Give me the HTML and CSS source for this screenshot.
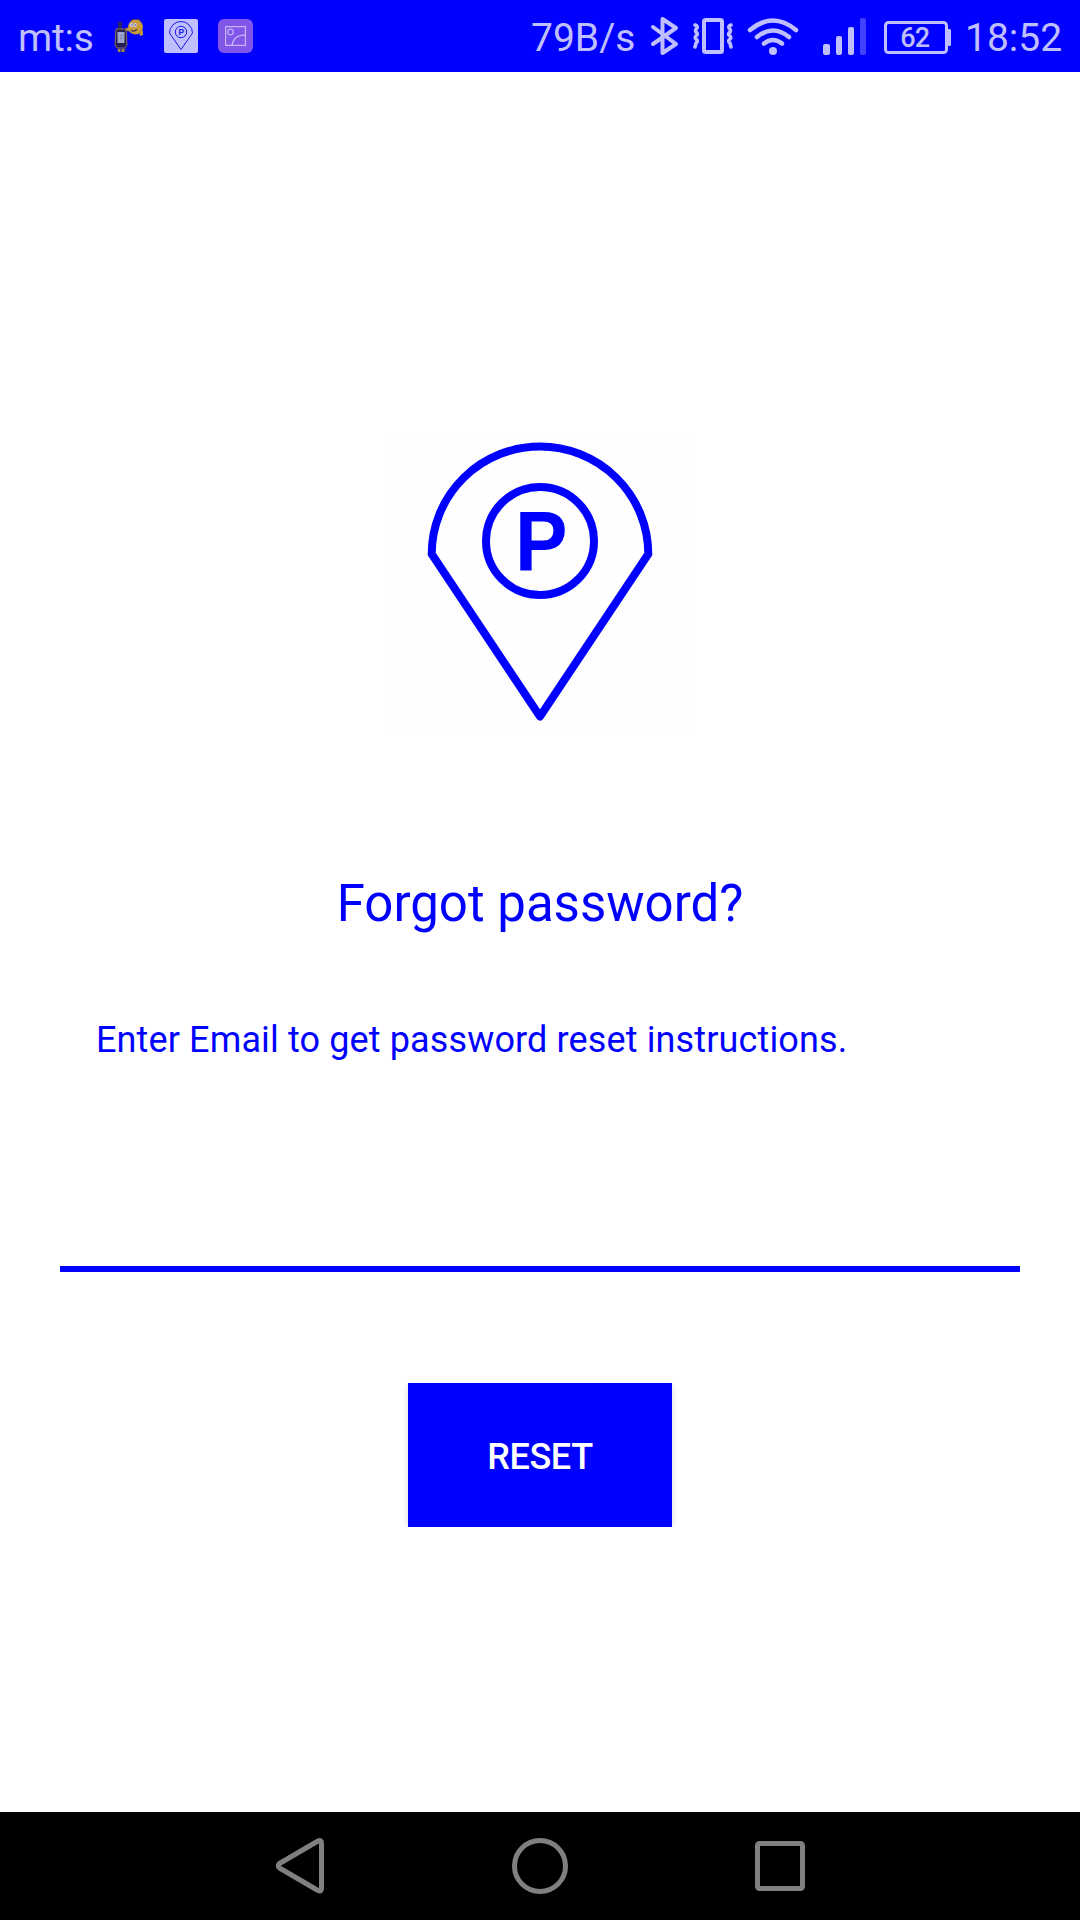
FILE: index.html
```html
<!DOCTYPE html>
<html lang="en">
<head>
<meta charset="utf-8">
<title>Forgot password</title>
<link rel="stylesheet" href="styles.css">
</head>
<body>
<div class="screen">
  <header class="status">
    <span class="carrier">mt:s</span>
    <svg class="ic walkie" viewBox="114 0 32 72">
      <path d="M118 22h4v9h-4z" fill="#27275e"/>
      <path d="M116 29h10l1 16-2 3h-8l-2-3z" fill="#252052" stroke="#8f7048" stroke-width="1"/>
      <path d="M117.500 32h7v11h-7z" fill="#9da6cf"/>
      <path d="M120 36l3-1m-3 4l3-1" stroke="#7782ae" stroke-width="1"/>
      <path d="M117 47l1 5h7l1-5" fill="#4d447b"/>
      <path d="M119 49v3m4-3v3" stroke="#a98a40" stroke-width="2"/>
      <path d="M126 29l4 1" stroke="#b48a35" stroke-width="3"/>
      <circle cx="135.500" cy="27" r="7.500" fill="#c99b38"/>
      <path d="M130 21q6-3 12 0l-3-2h-6z" fill="#5b4145"/>
      <ellipse cx="131.500" cy="25" rx="1.700" ry="2.300" fill="#c5c5ee"/>
      <ellipse cx="135.200" cy="25" rx="1.700" ry="2.300" fill="#c5c5ee"/>
      <path d="M131.500 25h1m2.500 0h1M131 30.500q3 1.500 6-1" stroke="#38285b" stroke-width="1.200" fill="none"/>
      <path d="M139 32l2-2 2 1v4l-3 1z" fill="#bd9136"/>
    </svg>
    <svg class="ic app" viewBox="164 0 34 72">
      <rect x="164" y="19" width="34" height="34" rx="2" fill="#bfbfff"/>
      <path d="M169.500 33a11.500 11.500 0 0 1 23 0L181 49.500z" fill="none" stroke="#1919e8" stroke-width="1"/>
      <circle cx="181" cy="32" r="5.700" fill="none" stroke="#1919e8" stroke-width="1"/>
      <text class="mini-p" x="178.500" y="35">P</text>
    </svg>
    <svg class="ic gallery" viewBox="218 0 35 72">
      <rect x="218" y="19" width="35" height="34" rx="6" fill="#8055e8"/>
      <g fill="none" stroke="#c1b5fb" stroke-width="1.200"><path d="M225.600 26.600h19.800v18.800h-19.800zM232 45.400q1-10 13.400-10.600"/><circle cx="230.500" cy="32" r="2.800"/></g>
    </svg>
    <span class="speed">79B/s</span>
    <svg class="ic bluetooth" viewBox="650 0 29 72">
      <path d="M653 27l23 17-13.500 9V19L676 28 653 44" fill="none" stroke="#bfbfff" stroke-width="4" stroke-linecap="round" stroke-linejoin="round"/>
    </svg>
    <svg class="ic vibrate" viewBox="692 0 42 72">
      <g fill="none" stroke="#bfbfff" stroke-width="4" stroke-linecap="round" stroke-linejoin="round">
        <rect x="704" y="20" width="18" height="32" rx="1.500"/>
        <path stroke-width="3.600" d="M695 25q3 1 2 3-3 3 0 5 1 2-1 3-2 2 1 4 1 2-1 3l-1 4M731 25q-3 1-2 3 3 3 0 5-1 2 1 3 2 2-1 4-1 2 1 3l1 4"/>
      </g>
    </svg>
    <svg class="ic wifi" viewBox="747 0 52 72">
      <g fill="none" stroke="#bfbfff" stroke-width="4.500" stroke-linecap="round"><path d="M750 30q23-19 46 0M757 37q16-13 32 0M764 43.500q9-7 18 0"/></g>
      <circle cx="773" cy="51" r="4" fill="#bfbfff"/>
    </svg>
    <svg class="ic signal" viewBox="823 0 43 72">
      <g fill="#bfbfff"><rect x="823" y="44" width="7" height="11" rx="2"/><rect x="836" y="36" width="6" height="19" rx="2"/><rect x="848" y="27" width="6" height="28" rx="2"/></g>
      <rect x="860" y="18" width="6" height="37" rx="2" fill="#4040ff"/>
    </svg>
    <svg class="ic battery" viewBox="884 0 67 72">
      <rect x="885.500" y="22.500" width="61" height="30" rx="3" fill="none" stroke="#bfbfff" stroke-width="3"/>
      <path d="M947 29h2.500q1.500 0 1.500 1.500v14q0 1.500-1.500 1.500H947z" fill="#bfbfff"/>
      <text class="level" x="900.200" y="47" textLength="30">62</text>
    </svg>
    <span class="clock">18:52</span>
  </header>
  <main class="content">
    <svg class="logo" viewBox="390 435 300 296">
      <rect x="390" y="435" width="300" height="296" fill="#fefefe"/>
      <g fill="none" stroke="#00f" stroke-width="8">
        <path d="M431.700 554a108.300 107.500 0 0 1 216.600 0L540 716.500z" stroke-linejoin="round"/>
        <circle cx="540" cy="541" r="54"/>
      </g>
      <text class="logo-p" x="515" y="570.500" textLength="52.500" lengthAdjust="spacingAndGlyphs">P</text>
    </svg>
    <h1 class="title">Forgot password?</h1>
    <p class="hint">Enter Email to get password reset instructions.</p>
    <input class="email" type="email" aria-label="Email">
    <button class="reset" type="button">RESET</button>
  </main>
  <nav class="nav">
    <svg viewBox="270 1836 60 60"><path d="M279.500 1863.500q-2.500 2 0 4.500l38.500 22.500q3.500 1.500 3.500-2v-45.500q0-3.500-3.500-2z" fill="none" stroke="#808080" stroke-width="5" stroke-linejoin="round"/></svg>
    <svg viewBox="510 1836 60 60"><circle cx="540" cy="1866" r="25.500" fill="none" stroke="#808080" stroke-width="5"/></svg>
    <svg viewBox="750 1836 60 60"><rect x="757.500" y="1843.500" width="45" height="45" rx="2" fill="none" stroke="#808080" stroke-width="5"/></svg>
  </nav>
</div>
</body>
</html>
```
FILE: styles.css
```css
* { box-sizing: border-box; }
body { margin: 0; font-family: Roboto, "Liberation Sans", sans-serif; background: #fff; }
.screen { width: 1080px; height: 1920px; display: flex; flex-direction: column; overflow: hidden; }
.status { height: 72px; background: #00f; color: #bfbfff; display: flex; align-items: center; flex: none; font-size: 39px; line-height: 72px; white-space: nowrap; }
.ic { height: 72px; flex: none; }
.carrier, .speed, .clock { padding-top: 3px; }
.carrier { width: 96px; margin-left: 18px; letter-spacing: -.2px; }
.walkie { width: 32px; }
.app { width: 34px; margin-left: 18px; }
.gallery { width: 35px; margin-left: 20px; }
.speed { width: 119px; margin-left: 278px; }
.bluetooth { width: 29px; }
.vibrate { width: 42px; margin-left: 13px; }
.wifi { width: 52px; margin-left: 13px; }
.signal { width: 43px; margin-left: 24px; }
.battery { width: 67px; margin-left: 18px; }
.clock { margin-left: 14px; }
.mini-p { font: bold 8.5px "Liberation Sans", sans-serif; fill: #1919e8; }
.level { font: 500 27px Roboto, sans-serif; fill: #bfbfff; }
.content { flex: 1; display: flex; flex-direction: column; align-items: center; padding-top: 363px; }
.logo { width: 300px; height: 296px; flex: none; }
.logo-p { font: bold 85px "Liberation Sans", sans-serif; fill: #00f; }
.title { margin: 143px 0 0; font-size: 51px; font-weight: 400; line-height: 60px; color: #00f; white-space: nowrap; }
.hint { align-self: flex-start; margin: 84px 0 0 96px; font-size: 36px; line-height: 44px; letter-spacing: .13px; color: #00f; white-space: nowrap; }
.email { width: 960px; height: 130px; margin: 80px 0 0; padding: 0 36px; border: 0; border-bottom: 6px solid #00f; background: transparent; font: 36px Roboto, sans-serif; color: #00f; outline: 0; }
.reset { width: 264px; height: 144px; margin-top: 111px; padding: 4px 0 0; border: 0; background: #00f; color: #fff; font: 500 36px Roboto, sans-serif; letter-spacing: -.4px; box-shadow: 0 0 7px rgba(0, 0, 0, .14); clip-path: inset(0 -8px 0 -8px); }
.nav { height: 108px; background: #000; flex: none; display: flex; justify-content: center; align-items: center; gap: 180px; }
.nav svg { width: 60px; height: 60px; }
```
